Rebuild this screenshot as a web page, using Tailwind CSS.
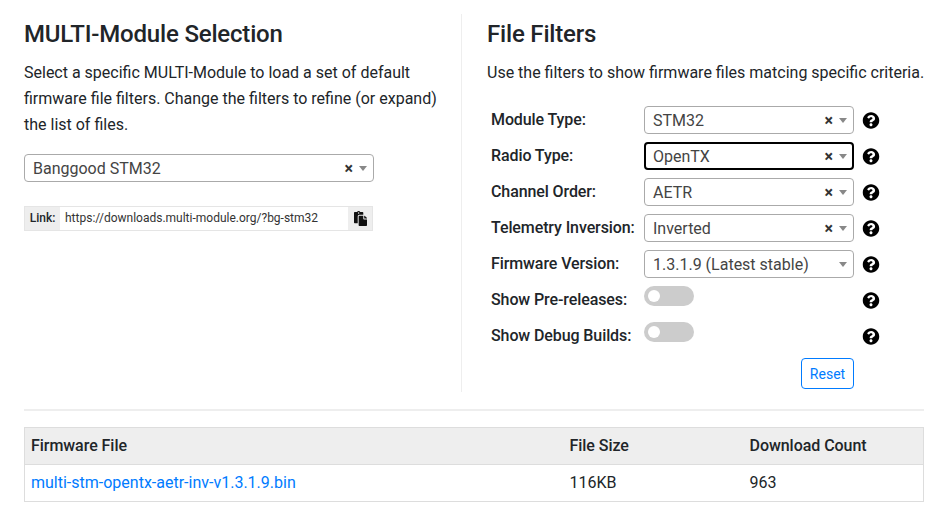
<!DOCTYPE html>
<html lang="en">
<head>
  <meta charset="UTF-8" />
  <title>MULTI-Module Firmware</title>
  <script src="https://cdn.jsdelivr.net/npm/@tailwindcss/browser@4"></script>
</head>
<body class="bg-white text-[#212529] font-['Roboto',sans-serif] text-base overflow-hidden">
  <main class="w-[942px] h-[515px] pl-6 pr-[18px] pt-[14px]">
    <div class="flex h-[378px]">
      <section class="w-[438px] shrink-0 border-r-0">
        <h2 class="text-2xl font-medium leading-[40px] tracking-[-0.18px]">MULTI-Module Selection</h2>
        <p class="mt-[6px] w-[420px] leading-[26px]">Select a specific MULTI-Module to load a set of default firmware file filters. Change the filters to refine (or expand) the list of files.</p>
        <div class="mt-[16px] w-[350px] h-[28px] border border-[#aaa] rounded flex items-center pl-2 pr-[6px] text-[#444]">
          <span class="flex-1 pt-px">Banggood STM32</span>
          <span class="text-[#333] font-bold text-base mr-[6px] pt-px">×</span>
          <span class="w-0 h-0 border-x-[4px] border-x-transparent border-t-[5px] border-t-[#888]"></span>
        </div>
        <div class="mt-6 w-[349px] h-[25px] border border-[#e5e5e5] flex items-stretch text-xs">
          <span class="bg-[#eee] w-[35px] flex items-center justify-center font-medium pb-px">Link:</span>
          <span class="flex-1 flex items-center pl-[5px] pb-px text-[#333]">https://downloads.multi-module.org/?bg-stm32</span>
          <span class="bg-[#eee] w-6 flex items-center justify-center pl-px">
            <svg class="w-[13px] h-[15px]" viewBox="0 0 448 512" fill="#111"><path d="M128 184c0-30.879 25.122-56 56-56h136V56c0-13.255-10.745-24-24-24h-80.61C204.306 12.89 183.637 0 160 0s-44.306 12.89-55.39 32H24C10.745 32 0 42.745 0 56v336c0 13.255 10.745 24 24 24h104V184zm32-144c13.255 0 24 10.745 24 24s-10.745 24-24 24-24-10.745-24-24 10.745-24 24-24zm184 248h104v200c0 13.255-10.745 24-24 24H184c-13.255 0-24-10.745-24-24V184c0-13.255 10.745-24 24-24h136v104c0 13.2 10.8 24 24 24zm104-38.059V256h-96v-96h6.059a24 24 0 0 1 16.97 7.029l65.941 65.941a24.002 24.002 0 0 1 7.03 16.971z"/></svg>
          </span>
        </div>
      </section>

      <section class="flex-1 border-l border-[#eee] ml-[-1px] pl-[25px]">
        <h2 class="text-2xl font-medium leading-[40px] tracking-[-0.18px]">File Filters</h2>
        <p class="mt-[6px] leading-[26px] whitespace-nowrap">Use the filters to show firmware files matcing specific criteria.</p>
        <div class="mt-[16px] pl-1 grid grid-cols-[153px_210px_34px] auto-rows-[36px] items-center font-medium tracking-[-0.1px]">
          <span>Module Type:</span>
          <div class="h-[28px] border border-[#aaa] rounded flex items-center pl-2 pr-[6px] text-[#444] font-normal tracking-normal">
            <span class="flex-1 pt-px">STM32</span><span class="text-[#333] font-bold text-base mr-[6px] pt-px">×</span><span class="w-0 h-0 border-x-[4px] border-x-transparent border-t-[5px] border-t-[#888]"></span>
          </div>
          <svg class="w-[18px] h-[17px] ml-2" viewBox="0 0 512 512"><path d="M504 256c0 136.997-111.043 248-248 248S8 392.997 8 256C8 119.083 119.043 8 256 8s248 111.083 248 248zM262.655 90c-54.497 0-89.255 22.957-116.549 63.758-3.536 5.286-2.353 12.415 2.715 16.258l34.699 26.31c5.205 3.947 12.621 3.008 16.665-2.122 17.864-22.658 30.113-35.797 57.303-35.797 20.429 0 45.698 13.148 45.698 32.958 0 14.976-12.363 22.667-32.534 33.976C247.128 238.528 216 254.941 216 296v4c0 6.627 5.373 12 12 12h56c6.627 0 12-5.373 12-12v-1.333c0-28.462 83.186-29.647 83.186-106.667 0-58.002-60.165-102-116.531-102zM256 338c-25.365 0-46 20.635-46 46 0 25.364 20.635 46 46 46s46-20.636 46-46c0-25.365-20.635-46-46-46z"/></svg>

          <span>Radio Type:</span>
          <div class="h-[28px] border-2 border-black rounded flex items-center pl-[7px] pr-[5px] text-[#444] font-normal tracking-normal">
            <span class="flex-1 pt-px">OpenTX</span><span class="text-[#333] font-bold text-base mr-[6px] pt-px">×</span><span class="w-0 h-0 border-x-[4px] border-x-transparent border-t-[5px] border-t-[#888]"></span>
          </div>
          <svg class="w-[18px] h-[17px] ml-2" viewBox="0 0 512 512"><path d="M504 256c0 136.997-111.043 248-248 248S8 392.997 8 256C8 119.083 119.043 8 256 8s248 111.083 248 248zM262.655 90c-54.497 0-89.255 22.957-116.549 63.758-3.536 5.286-2.353 12.415 2.715 16.258l34.699 26.31c5.205 3.947 12.621 3.008 16.665-2.122 17.864-22.658 30.113-35.797 57.303-35.797 20.429 0 45.698 13.148 45.698 32.958 0 14.976-12.363 22.667-32.534 33.976C247.128 238.528 216 254.941 216 296v4c0 6.627 5.373 12 12 12h56c6.627 0 12-5.373 12-12v-1.333c0-28.462 83.186-29.647 83.186-106.667 0-58.002-60.165-102-116.531-102zM256 338c-25.365 0-46 20.635-46 46 0 25.364 20.635 46 46 46s46-20.636 46-46c0-25.365-20.635-46-46-46z"/></svg>

          <span>Channel Order:</span>
          <div class="h-[28px] border border-[#aaa] rounded flex items-center pl-2 pr-[6px] text-[#444] font-normal tracking-normal">
            <span class="flex-1 pt-px">AETR</span><span class="text-[#333] font-bold text-base mr-[6px] pt-px">×</span><span class="w-0 h-0 border-x-[4px] border-x-transparent border-t-[5px] border-t-[#888]"></span>
          </div>
          <svg class="w-[18px] h-[17px] ml-2" viewBox="0 0 512 512"><path d="M504 256c0 136.997-111.043 248-248 248S8 392.997 8 256C8 119.083 119.043 8 256 8s248 111.083 248 248zM262.655 90c-54.497 0-89.255 22.957-116.549 63.758-3.536 5.286-2.353 12.415 2.715 16.258l34.699 26.31c5.205 3.947 12.621 3.008 16.665-2.122 17.864-22.658 30.113-35.797 57.303-35.797 20.429 0 45.698 13.148 45.698 32.958 0 14.976-12.363 22.667-32.534 33.976C247.128 238.528 216 254.941 216 296v4c0 6.627 5.373 12 12 12h56c6.627 0 12-5.373 12-12v-1.333c0-28.462 83.186-29.647 83.186-106.667 0-58.002-60.165-102-116.531-102zM256 338c-25.365 0-46 20.635-46 46 0 25.364 20.635 46 46 46s46-20.636 46-46c0-25.365-20.635-46-46-46z"/></svg>

          <span>Telemetry Inversion:</span>
          <div class="h-[28px] border border-[#aaa] rounded flex items-center pl-2 pr-[6px] text-[#444] font-normal tracking-normal">
            <span class="flex-1 pt-px">Inverted</span><span class="text-[#333] font-bold text-base mr-[6px] pt-px">×</span><span class="w-0 h-0 border-x-[4px] border-x-transparent border-t-[5px] border-t-[#888]"></span>
          </div>
          <svg class="w-[18px] h-[17px] ml-2" viewBox="0 0 512 512"><path d="M504 256c0 136.997-111.043 248-248 248S8 392.997 8 256C8 119.083 119.043 8 256 8s248 111.083 248 248zM262.655 90c-54.497 0-89.255 22.957-116.549 63.758-3.536 5.286-2.353 12.415 2.715 16.258l34.699 26.31c5.205 3.947 12.621 3.008 16.665-2.122 17.864-22.658 30.113-35.797 57.303-35.797 20.429 0 45.698 13.148 45.698 32.958 0 14.976-12.363 22.667-32.534 33.976C247.128 238.528 216 254.941 216 296v4c0 6.627 5.373 12 12 12h56c6.627 0 12-5.373 12-12v-1.333c0-28.462 83.186-29.647 83.186-106.667 0-58.002-60.165-102-116.531-102zM256 338c-25.365 0-46 20.635-46 46 0 25.364 20.635 46 46 46s46-20.636 46-46c0-25.365-20.635-46-46-46z"/></svg>

          <span>Firmware Version:</span>
          <div class="h-[28px] border border-[#aaa] rounded flex items-center pl-2 pr-[6px] text-[#444] font-normal tracking-normal">
            <span class="flex-1 pt-px">1.3.1.9 (Latest stable)</span><span class="w-0 h-0 border-x-[4px] border-x-transparent border-t-[5px] border-t-[#888]"></span>
          </div>
          <svg class="w-[18px] h-[17px] ml-2" viewBox="0 0 512 512"><path d="M504 256c0 136.997-111.043 248-248 248S8 392.997 8 256C8 119.083 119.043 8 256 8s248 111.083 248 248zM262.655 90c-54.497 0-89.255 22.957-116.549 63.758-3.536 5.286-2.353 12.415 2.715 16.258l34.699 26.31c5.205 3.947 12.621 3.008 16.665-2.122 17.864-22.658 30.113-35.797 57.303-35.797 20.429 0 45.698 13.148 45.698 32.958 0 14.976-12.363 22.667-32.534 33.976C247.128 238.528 216 254.941 216 296v4c0 6.627 5.373 12 12 12h56c6.627 0 12-5.373 12-12v-1.333c0-28.462 83.186-29.647 83.186-106.667 0-58.002-60.165-102-116.531-102zM256 338c-25.365 0-46 20.635-46 46 0 25.364 20.635 46 46 46s46-20.636 46-46c0-25.365-20.635-46-46-46z"/></svg>

          <span>Show Pre-releases:</span>
          <div class="w-[50px] h-5 mb-2 rounded-full bg-[#ccc] flex items-center pl-1">
            <span class="w-3 h-3 rounded-full bg-white"></span>
          </div>
          <svg class="w-[18px] h-[17px] ml-2" viewBox="0 0 512 512"><path d="M504 256c0 136.997-111.043 248-248 248S8 392.997 8 256C8 119.083 119.043 8 256 8s248 111.083 248 248zM262.655 90c-54.497 0-89.255 22.957-116.549 63.758-3.536 5.286-2.353 12.415 2.715 16.258l34.699 26.31c5.205 3.947 12.621 3.008 16.665-2.122 17.864-22.658 30.113-35.797 57.303-35.797 20.429 0 45.698 13.148 45.698 32.958 0 14.976-12.363 22.667-32.534 33.976C247.128 238.528 216 254.941 216 296v4c0 6.627 5.373 12 12 12h56c6.627 0 12-5.373 12-12v-1.333c0-28.462 83.186-29.647 83.186-106.667 0-58.002-60.165-102-116.531-102zM256 338c-25.365 0-46 20.635-46 46 0 25.364 20.635 46 46 46s46-20.636 46-46c0-25.365-20.635-46-46-46z"/></svg>

          <span>Show Debug Builds:</span>
          <div class="w-[50px] h-5 mb-2 rounded-full bg-[#ccc] flex items-center pl-1">
            <span class="w-3 h-3 rounded-full bg-white"></span>
          </div>
          <svg class="w-[18px] h-[17px] ml-2" viewBox="0 0 512 512"><path d="M504 256c0 136.997-111.043 248-248 248S8 392.997 8 256C8 119.083 119.043 8 256 8s248 111.083 248 248zM262.655 90c-54.497 0-89.255 22.957-116.549 63.758-3.536 5.286-2.353 12.415 2.715 16.258l34.699 26.31c5.205 3.947 12.621 3.008 16.665-2.122 17.864-22.658 30.113-35.797 57.303-35.797 20.429 0 45.698 13.148 45.698 32.958 0 14.976-12.363 22.667-32.534 33.976C247.128 238.528 216 254.941 216 296v4c0 6.627 5.373 12 12 12h56c6.627 0 12-5.373 12-12v-1.333c0-28.462 83.186-29.647 83.186-106.667 0-58.002-60.165-102-116.531-102zM256 338c-25.365 0-46 20.635-46 46 0 25.364 20.635 46 46 46s46-20.636 46-46c0-25.365-20.635-46-46-46z"/></svg>
        </div>
        <div class="w-[367px] flex justify-end mt-[4px]">
          <button class="w-[53px] h-[31px] border border-[#007bff] rounded text-sm text-[#007bff]">Reset</button>
        </div>
      </section>
    </div>

    <hr class="mt-[17px] border-t-2 border-[#eee] w-[900px]" />

    <table class="mt-4 w-[900px] table-fixed border border-[#ddd] border-collapse">
      <thead>
        <tr class="bg-[#eee] h-[37px] text-left font-medium">
          <th class="w-[539px] pl-[6px] font-medium tracking-[-0.05px]">Firmware File</th>
          <th class="w-[180px] pl-[6px] font-medium tracking-[-0.05px]">File Size</th>
          <th class="pl-[6px] font-medium tracking-[-0.05px]">Download Count</th>
        </tr>
      </thead>
      <tbody>
        <tr class="h-[37px] border-t border-[#ddd]">
          <td class="pl-[6px] text-[#007bff]"><a href="#">multi-stm-opentx-aetr-inv-v1.3.1.9.bin</a></td>
          <td class="pl-[6px]">116KB</td>
          <td class="pl-[6px]">963</td>
        </tr>
      </tbody>
    </table>
  </main>
</body>
</html>
